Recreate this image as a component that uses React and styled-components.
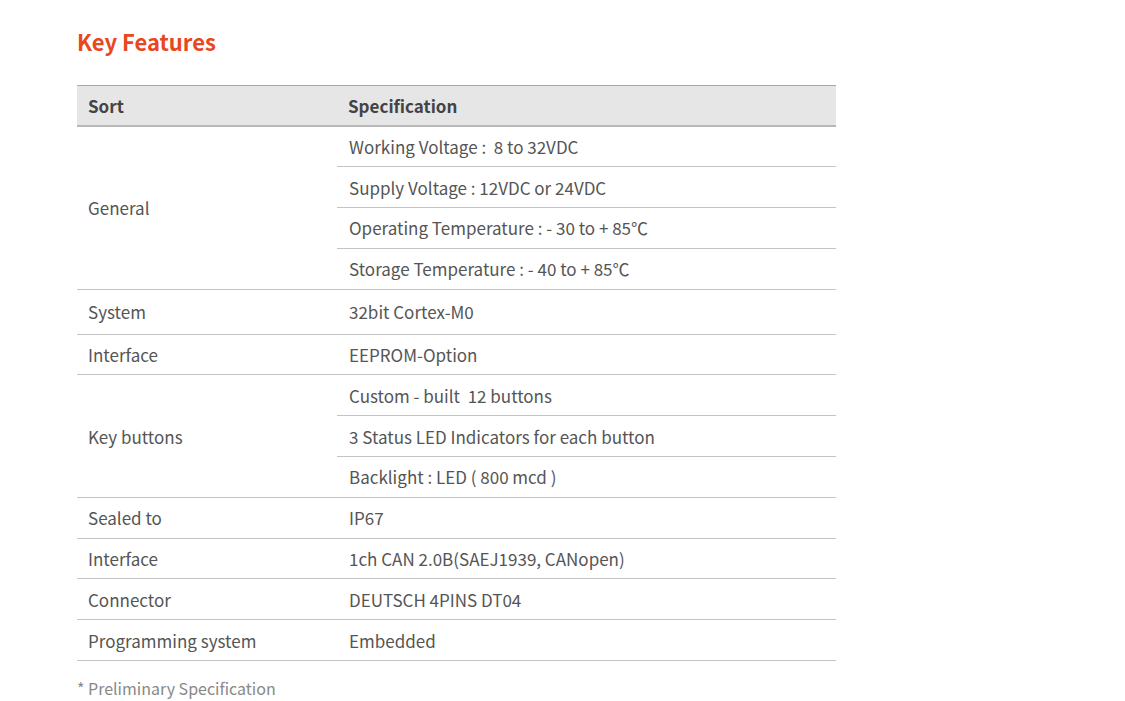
import styled, { createGlobalStyle } from 'styled-components'

const GlobalStyle = createGlobalStyle`
  body {
    margin: 0;
    background: #fff;
    font-family: "Noto Sans CJK KR", "Noto Sans", sans-serif;
  }
`

const Page = styled.section`
  padding: 25px 0 0 77px;
`

const Heading = styled.h2`
  margin: 0 0 28px 0;
  font-size: 22px;
  font-weight: 700;
  color: #e8481c;
  line-height: 32px;
`

const Table = styled.table`
  width: 759px;
  table-layout: fixed;
  border-collapse: collapse;
  font-size: 17px;
  color: #555;
`

const HeadCell = styled.th`
  box-sizing: border-box;
  height: 40px;
  padding: 0 11px;
  text-align: left;
  font-weight: 700;
  color: #444;
  background: #e6e6e6;
  border-top: 1px solid #a8a8a8;
  border-bottom: 2px solid #b8b8b8;
  width: ${p => p.$width || 'auto'};
`

const Cell = styled.td`
  height: ${p => p.$tall ? '44px' : '39.8px'};
  padding: 0 ${p => p.$spec ? '12px' : '11px'};
  border-bottom: 1px solid #c4c4c4;
  font-weight: 400;
  vertical-align: middle;
  white-space: pre;
`

const Note = styled.p`
  margin: 16px 0 0 0;
  font-size: 16px;
  line-height: 22px;
  color: #888;
`

const groups = [
  { sort: 'General', specs: ['Working Voltage :  8 to 32VDC', 'Supply Voltage : 12VDC or 24VDC', 'Operating Temperature : - 30 to + 85℃', 'Storage Temperature : - 40 to + 85℃'] },
  { sort: 'System', specs: ['32bit Cortex-M0'], tall: true },
  { sort: 'Interface', specs: ['EEPROM-Option'] },
  { sort: 'Key buttons', specs: ['Custom - built  12 buttons', '3 Status LED Indicators for each button', 'Backlight : LED ( 800 mcd )'] },
  { sort: 'Sealed to', specs: ['IP67'] },
  { sort: 'Interface', specs: ['1ch CAN 2.0B(SAEJ1939, CANopen)'] },
  { sort: 'Connector', specs: ['DEUTSCH 4PINS DT04'] },
  { sort: 'Programming system', specs: ['Embedded'] },
]

const App = () => {
  return (
    <Page>
      <GlobalStyle />
      <Heading>Key Features</Heading>
      <Table>
        <thead>
          <tr>
            <HeadCell $width="260px">Sort</HeadCell>
            <HeadCell>Specification</HeadCell>
          </tr>
        </thead>
        <tbody>
          {groups.map((g, gi) => g.specs.map((s, si) => (
            <tr key={gi + '-' + si}>
              {si === 0 && <Cell rowSpan={g.specs.length} $tall={g.tall}>{g.sort}</Cell>}
              <Cell $spec $tall={g.tall}>{s}</Cell>
            </tr>
          )))}
        </tbody>
      </Table>
      <Note>* Preliminary Specification</Note>
    </Page>
  )
}

export default App
